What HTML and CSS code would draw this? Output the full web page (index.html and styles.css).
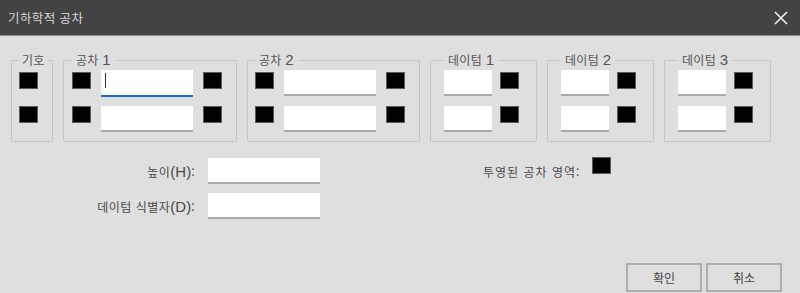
FILE: index.html
```html
<!DOCTYPE html>
<html lang="ko">
  <head>
    <meta charset="UTF-8" />
    <meta name="viewport" content="width=device-width, initial-scale=1.0" />
    <title>기하학적 공차</title>
    <link rel="stylesheet" href="styles.css">
  </head>

  <body>
    <div class="dialog">
      <div class="titlebar">
        <span class="title">기하학적 공차</span>
        <svg class="close" width="14" height="14" viewBox="0 0 14 14">
          <path d="M1 1 L13 13 M13 1 L1 13" stroke="#f2f2f2" stroke-width="1.6" fill="none" />
        </svg>
      </div>

      <div class="content">
        <div class="groups">
          <fieldset class="group sym">
            <legend>기호</legend>
            <div class="grid">
              <span class="sq first"></span>
              <span class="sq"></span>
            </div>
          </fieldset>

          <fieldset class="group tol">
            <legend>공차 <span class="num">1</span></legend>
            <div class="grid">
              <span class="sq first"></span>
              <div class="field focus"><span class="caret"></span></div>
              <span class="sq first"></span>
              <span class="sq"></span>
              <div class="field"></div>
              <span class="sq"></span>
            </div>
          </fieldset>

          <fieldset class="group tol tol2">
            <legend>공차 <span class="num">2</span></legend>
            <div class="grid">
              <span class="sq first"></span>
              <div class="field"></div>
              <span class="sq first"></span>
              <span class="sq"></span>
              <div class="field"></div>
              <span class="sq"></span>
            </div>
          </fieldset>

          <fieldset class="group datum">
            <legend>데이텀 <span class="num">1</span></legend>
            <div class="grid">
              <div class="field"></div>
              <span class="sq first"></span>
              <div class="field"></div>
              <span class="sq"></span>
            </div>
          </fieldset>

          <fieldset class="group datum">
            <legend>데이텀 <span class="num">2</span></legend>
            <div class="grid">
              <div class="field"></div>
              <span class="sq first"></span>
              <div class="field"></div>
              <span class="sq"></span>
            </div>
          </fieldset>

          <fieldset class="group datum">
            <legend>데이텀 <span class="num">3</span></legend>
            <div class="grid">
              <div class="field"></div>
              <span class="sq first"></span>
              <div class="field"></div>
              <span class="sq"></span>
            </div>
          </fieldset>
        </div>

        <div class="extra">
          <div class="form">
            <label>높이<span class="num">(H)</span>:</label>
            <div class="field"></div>
            <label>데이텀 식별자<span class="num">(D)</span>:</label>
            <div class="field"></div>
          </div>
          <div class="projected">
            <label>투영된 공차 영역:</label>
            <span class="sq"></span>
          </div>
        </div>

        <div class="buttons">
          <button class="btn">확인</button>
          <button class="btn">취소</button>
        </div>
      </div>
    </div>
  </body>
</html>
```

FILE: styles.css
```css
body {
  margin: 0;
  font-family: "Noto Sans CJK KR", "Noto Sans", sans-serif;
  font-size: 12px;
  color: #4a4a4a;
  background-color: #dfdfdf;
}

.dialog {
  width: 800px;
  height: 293px;
  display: flex;
  flex-direction: column;
  overflow: hidden;
}

.titlebar {
  height: 35px;
  background-color: #434343;
  border-bottom: 1px solid #8c8c8c;
  display: flex;
  align-items: center;
  justify-content: space-between;
  padding: 0 12px 0 8px;
}

.title {
  color: #d8d8d8;
  font-size: 12.5px;
  letter-spacing: 0.4px;
}

.close {
  margin-top: 1px;
}

.content {
  flex: 1;
  display: flex;
  flex-direction: column;
  padding: 17px 0 0 11px;
}

.groups {
  display: flex;
  gap: 10px;
}

.group {
  margin: 0;
  min-width: 0;
  border: 1px solid #c6c6c6;
  border-radius: 1px;
  padding: 3px 14px 9px 8px;
}

.group legend {
  padding: 0 4px;
  line-height: 14px;
  height: 14px;
  color: #555;
  letter-spacing: 0.3px;
  white-space: nowrap;
}

.num {
  font-family: "Liberation Sans", Arial, sans-serif;
  font-size: 15px;
  letter-spacing: 0;
}

.grid {
  display: grid;
  grid-template-columns: 19px 92px 19px;
  grid-auto-rows: 26px;
  column-gap: 10px;
  row-gap: 10px;
}

.sym {
  width: 19px;
  padding-left: 7px;
  padding-right: 14px;
}

.sym legend {
  padding: 0 3px;
}

.sym .grid {
  grid-template-columns: 19px;
}

.tol2 {
  padding-left: 7px;
  padding-right: 14px;
}

.datum {
  padding-left: 13px;
  padding-right: 17px;
}

.datum .grid {
  grid-template-columns: 48px 19px;
  column-gap: 8px;
}

.sq {
  display: inline-block;
  width: 19px;
  height: 17px;
  box-sizing: border-box;
  background-color: #000;
  border: 1px solid #5a5a5a;
}

.sq.first {
  margin-top: 2px;
}

.field {
  background-color: #fff;
  border-bottom: 2px solid #a9a9a9;
  box-sizing: border-box;
  position: relative;
}

.field.focus {
  border-bottom-color: #1a6fd0;
}

.grid .field.focus {
  height: 27px;
}

.caret {
  position: absolute;
  left: 4px;
  top: 3px;
  width: 1px;
  height: 15px;
  background-color: #333;
}

.extra {
  display: flex;
  margin-top: 16px;
}

.form {
  display: grid;
  grid-template-columns: 184px 112px;
  grid-auto-rows: 26px;
  column-gap: 13px;
  row-gap: 9px;
  align-items: center;
}

.form label {
  text-align: right;
  letter-spacing: 0.5px;
}

.form .field {
  height: 26px;
}

.projected {
  display: flex;
  align-items: flex-start;
  gap: 12px;
  margin-left: 163px;
}

.projected label {
  padding-top: 5px;
  letter-spacing: 1px;
}

.projected .sq {
  margin-top: -1px;
}

.buttons {
  margin-top: auto;
  display: flex;
  justify-content: flex-end;
  gap: 4px;
  padding-right: 18px;
  margin-bottom: 1px;
}

.btn {
  width: 76px;
  height: 29px;
  background-color: #dfdfdf;
  border: 2px solid #adadad;
  font-family: "Noto Sans CJK KR", sans-serif;
  font-size: 12px;
  color: #444;
  cursor: pointer;
}
```
